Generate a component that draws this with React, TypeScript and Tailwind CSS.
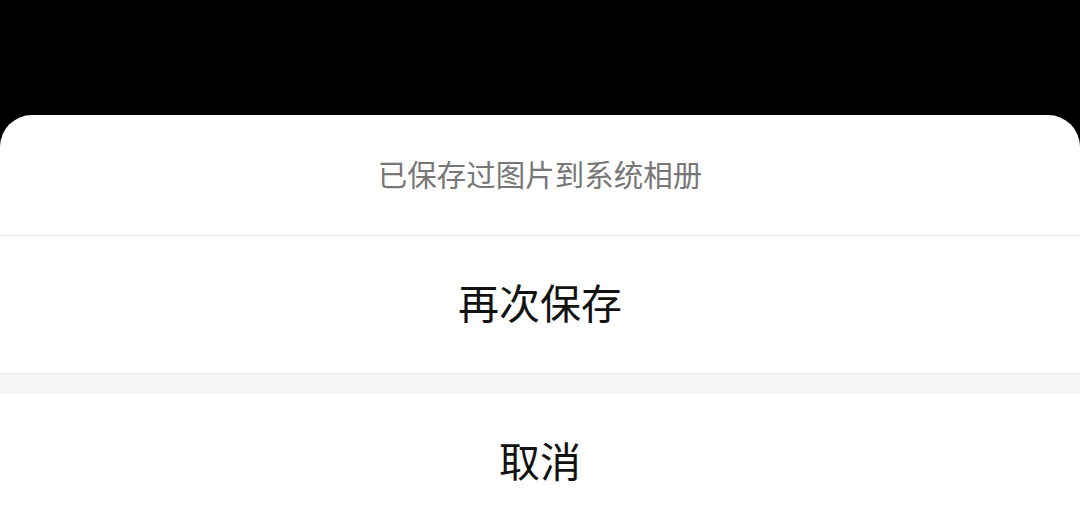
export default function App() {
  return (
    <div
      className="flex h-[531px] w-[1080px] flex-col overflow-hidden bg-black"
      style={{ fontFamily: '"Noto Sans CJK SC", "Noto Sans", sans-serif' }}
    >
      <div className="h-[115px] shrink-0" />
      <div className="flex flex-1 flex-col rounded-t-[32px] bg-white">
        <div className="flex h-[120px] shrink-0 items-center justify-center pb-[3px] text-[29.5px] text-[#777777]">
          已保存过图片到系统相册
        </div>
        <div className="h-px bg-[#e6e6e6]" />
        <div className="flex h-[137px] shrink-0 items-center justify-center pb-[5px] text-[41px] text-[#111111]">
          再次保存
        </div>
        <div className="h-px bg-[#e8e8e8]" />
        <div className="h-[20px] bg-[#f6f6f6]" />
        <div className="flex h-[137px] shrink-0 items-center justify-center pb-[5px] text-[41px] text-[#111111]">
          取消
        </div>
      </div>
    </div>
  )
}
